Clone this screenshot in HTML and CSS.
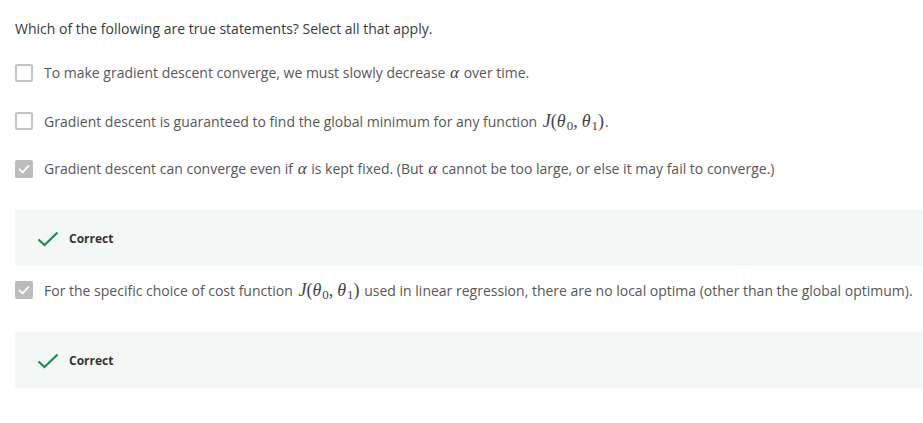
FILE: index.html
```html
<!DOCTYPE html>
<html>
<head>
<meta charset="utf-8">
<link rel="stylesheet" href="styles.css">
</head>
<body>
<div class="quiz">
  <p class="question">Which of the following are true statements? Select all that apply.</p>
  <div class="option">
    <span class="box"></span>
    <span class="label">To make gradient descent converge, we must slowly decrease <i class="m">α</i> over time.</span>
  </div>
  <div class="option">
    <span class="box"></span>
    <span class="label">Gradient descent is guaranteed to find the global minimum for any function <span class="m"><i>J</i>(<i>θ</i><sub>0</sub>,<span class="thin"></span><i>θ</i><sub>1</sub>)</span>.</span>
  </div>
  <div class="option">
    <span class="box checked"><svg viewBox="0 0 18 18" width="18" height="18"><path d="M4.5 9.3 L7.6 12.3 L13.5 6" fill="none" stroke="#fff" stroke-width="1.8" stroke-linecap="round" stroke-linejoin="round"/></svg></span>
    <span class="label">Gradient descent can converge even if <i class="m">α</i> is kept fixed. (But <i class="m">α</i> cannot be too large, or else it may fail to converge.)</span>
  </div>
  <div class="feedback">
    <svg class="tick" viewBox="0 0 22 16" width="22" height="16"><path d="M1.5 8.5 L7.5 14 L20.5 1.5" fill="none" stroke="#1d8a55" stroke-width="2.2"/></svg>
    <span>Correct</span>
  </div>
  <div class="option opt4">
    <span class="box checked"><svg viewBox="0 0 18 18" width="18" height="18"><path d="M4.5 9.3 L7.6 12.3 L13.5 6" fill="none" stroke="#fff" stroke-width="1.8" stroke-linecap="round" stroke-linejoin="round"/></svg></span>
    <span class="label">For the specific choice of cost function <span class="m"><i>J</i>(<i>θ</i><sub>0</sub>,<span class="thin"></span><i>θ</i><sub>1</sub>)</span> used in linear regression, there are no local optima (other than the global optimum).</span>
  </div>
  <div class="feedback">
    <svg class="tick" viewBox="0 0 22 16" width="22" height="16"><path d="M1.5 8.5 L7.5 14 L20.5 1.5" fill="none" stroke="#1d8a55" stroke-width="2.2"/></svg>
    <span>Correct</span>
  </div>
</div>
</body>
</html>
```
FILE: styles.css
```css
html, body {
  margin: 0;
  padding: 0;
  background: #fff;
}
body {
  font-family: "Open Sans", "Noto Sans", sans-serif;
  font-size: 14px;
  color: #575757;
}
.quiz {
  display: flex;
  flex-direction: column;
  padding: 19px 0 0 15px;
}
.question {
  margin: 0 0 25px 0;
  font-size: 14px;
  line-height: 20px;
  color: #373a3c;
}
.option {
  display: flex;
  align-items: center;
  height: 18px;
  margin-bottom: 30px;
}
.option.opt4 {
  margin-bottom: 31px;
}
.box {
  box-sizing: border-box;
  width: 18px;
  height: 18px;
  border: 2px solid #c4c4c4;
  border-radius: 2px;
  flex: none;
  display: flex;
  align-items: center;
  justify-content: center;
}
.box.checked {
  border: none;
  background: #bcbcbc;
}
.box svg { display: block; }
.label {
  margin-left: 11px;
  line-height: 20px;
  white-space: nowrap;
}
.m {
  font-family: "Liberation Serif", "DejaVu Serif", serif;
  font-size: 18px;
  color: #444;
  white-space: nowrap;
  margin: 0 1px 0 2px;
}
.m i { font-style: italic; }
i.m { font-style: italic; font-size: 17px; margin: 0 1px; }
.m sub {
  font-size: 13px;
  font-style: normal;
  vertical-align: -3px;
  line-height: 0;
  margin-left: 1px;
}
.thin {
  display: inline-block;
  width: 4px;
}
.feedback {
  display: flex;
  align-items: center;
  height: 56px;
  margin: 2px 0 15px 0;
  background: #f3f8f6;
  padding-left: 22px;
  font-size: 12px;
  font-weight: 700;
  color: #333;
}
.tick {
  display: block;
  margin-right: 10px;
  margin-top: 1px;
}
```
